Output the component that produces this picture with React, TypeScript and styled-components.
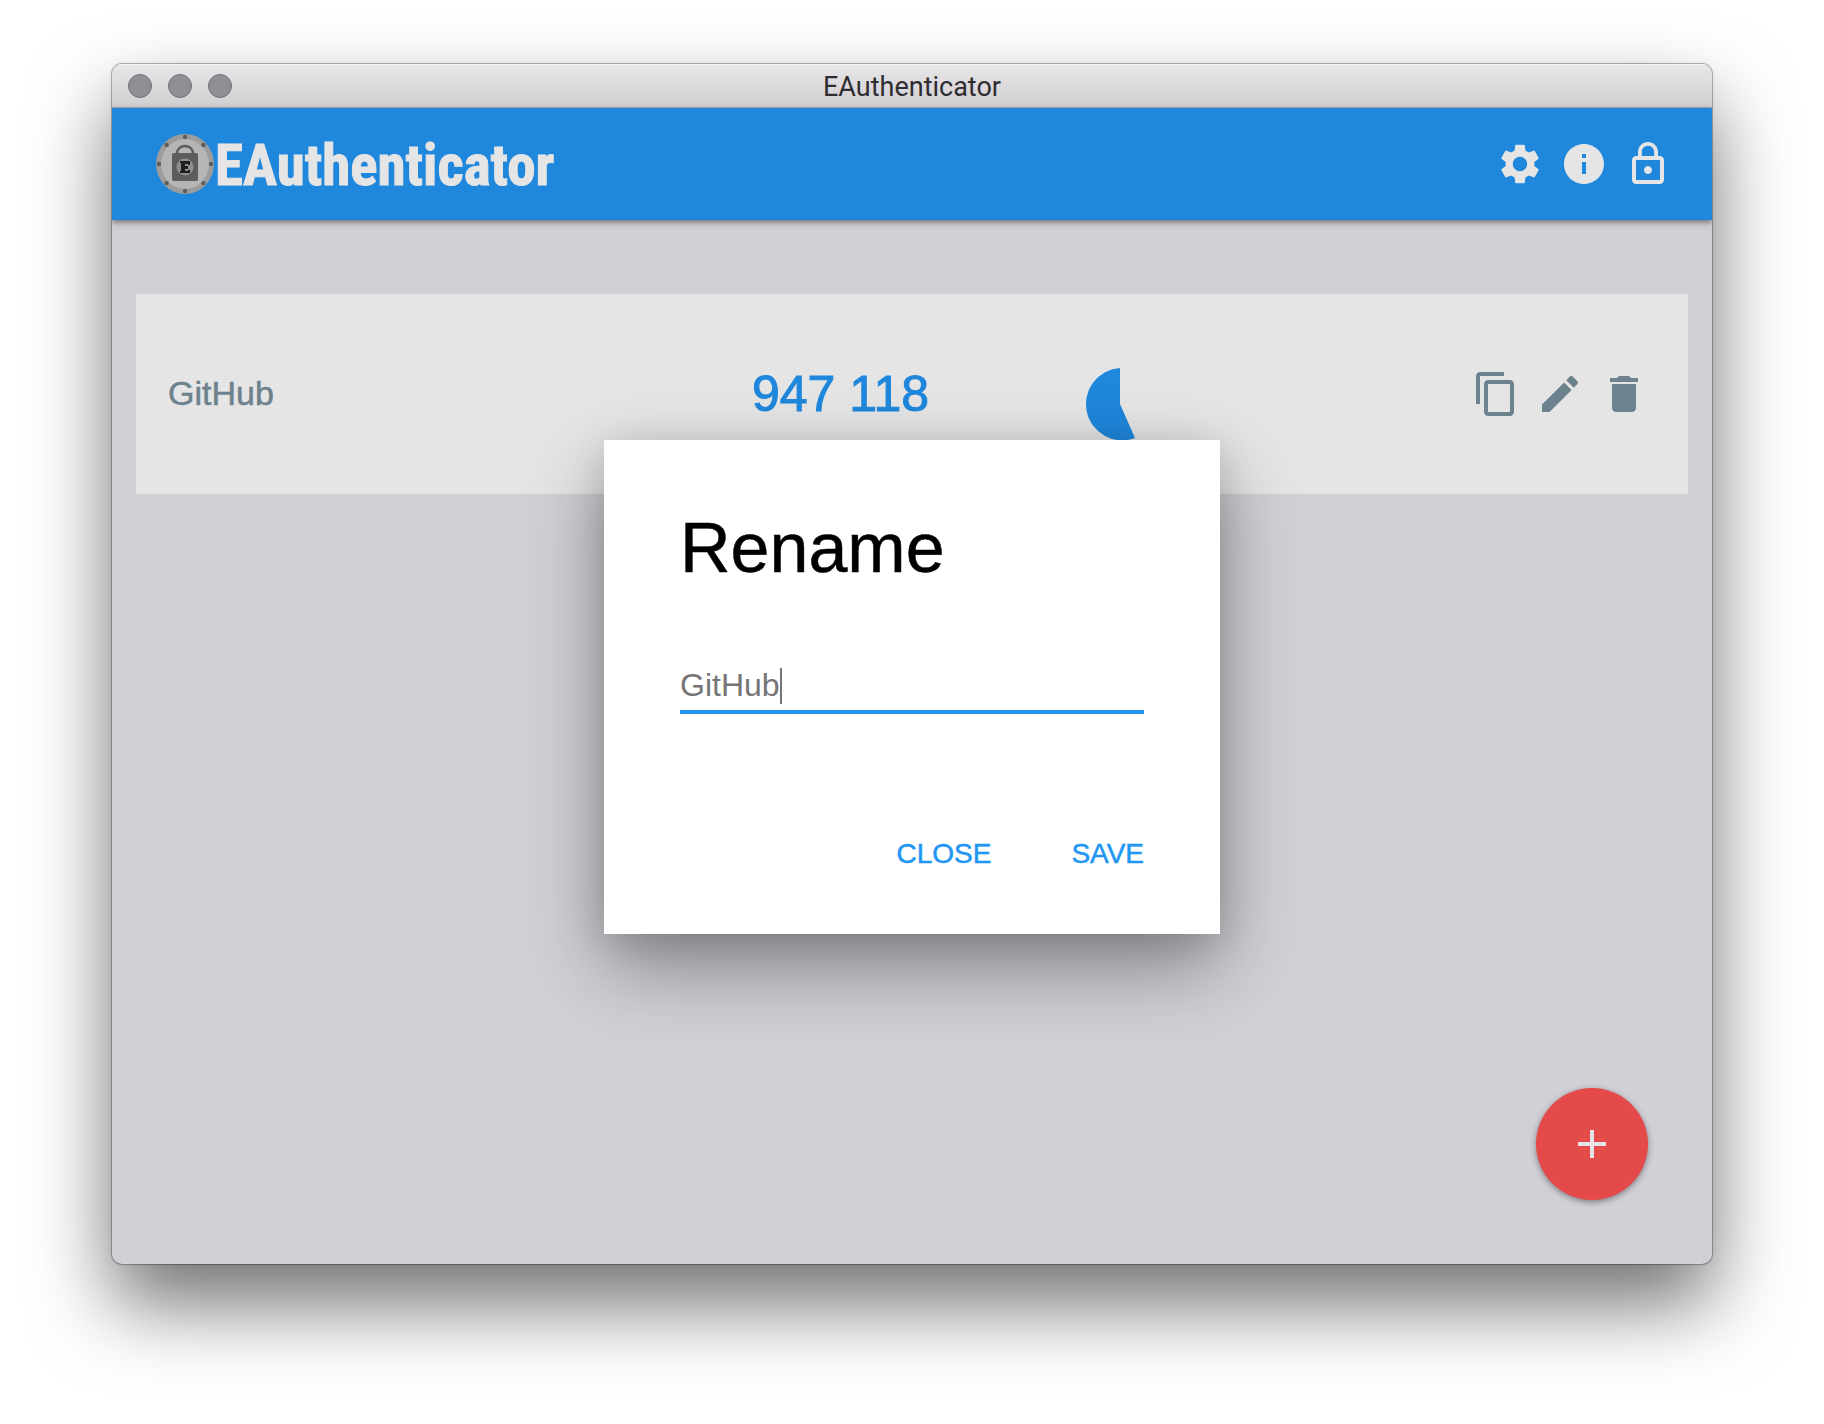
import React, { useState } from "react";
import styled, { createGlobalStyle } from "styled-components";
import {
  MdSettings,
  MdInfo,
  MdLockOutline,
  MdContentCopy,
  MdEdit,
  MdDelete,
  MdAdd,
} from "react-icons/md";

const GlobalStyle = createGlobalStyle`
  *, *::before, *::after { box-sizing: border-box; }
  body {
    margin: 0;
    background: #ffffff;
    font-family: "Liberation Sans", Arial, sans-serif;
  }
  button, input { font: inherit; }
`;

const Desktop = styled.div`
  display: flex;
  min-height: 100vh;
  padding: 64px 112px 160px;
`;

const AppWindow = styled.div`
  position: relative;
  flex: 1;
  display: flex;
  flex-direction: column;
  overflow: hidden;
  border-radius: 10px;
  background: #d1d0d6;
  box-shadow:
    0 0 0 1px rgba(0, 0, 0, 0.26),
    0 0 4px rgba(0, 0, 0, 0.1),
    0 40px 80px rgba(0, 0, 0, 0.56);
`;

const TitleBar = styled.div`
  display: grid;
  grid-template-columns: 1fr auto 1fr;
  align-items: center;
  height: 44px;
  padding: 0 16px;
  border-bottom: 1px solid #b1afb2;
  background: linear-gradient(#e8e6e9, #d1cfd2);
  box-shadow: inset 0 1px 0 #f5f4f5;
`;

const WindowTitle = styled.span`
  padding-top: 2px;
  color: #2e2d30;
  font: 27px/32px Roboto, sans-serif;
`;

const Lights = styled.div`
  display: flex;
  gap: 16px;
`;

const Light = styled.button`
  width: 24px;
  height: 24px;
  padding: 0;
  border: 1px solid #727176;
  border-radius: 50%;
  background: #8f8e94;
`;

const Header = styled.header`
  display: flex;
  align-items: center;
  justify-content: space-between;
  height: 112px;
  padding: 0 40px 0 44px;
  background: #1f87dc;
  color: #e5e5e5;
  box-shadow: 0 2px 6px rgba(0, 0, 0, 0.5);
`;

const Brand = styled.a`
  display: flex;
  align-items: center;
  gap: 1px;
  color: inherit;
  text-decoration: none;
`;

const BrandName = styled.span`
  padding-top: 4px;
  font: 700 57px/60px "Arial Narrow", "Roboto Condensed", Roboto, sans-serif;
  -webkit-text-stroke: 1px #e5e5e5;
`;

const IconRow = styled.div`
  display: flex;
  gap: 16px;
`;

const IconButton = styled.button`
  display: flex;
  padding: 0;
  border: 0;
  background: none;
  color: inherit;
  font-size: 48px;
  cursor: pointer;
`;

const Content = styled.main`
  flex: 1;
  padding: 74px 24px 0;
`;

const Account = styled.section`
  display: grid;
  grid-template-columns: 584px 334px 1fr auto;
  align-items: center;
  height: 200px;
  padding: 0 40px 0 32px;
  background: #e5e5e5;
  color: #6c828c;
`;

const AccountName = styled.span`
  padding-bottom: 2px;
  font-size: 34px;
  line-height: 40px;
  -webkit-text-stroke: 0.5px #6c828c;
`;

const Code = styled.output`
  color: #1f87dc;
  font-size: 50px;
  line-height: 56px;
  -webkit-text-stroke: 1px #1f87dc;
`;

const Timer = styled.svg`
  display: block;
  width: 72px;
  height: 72px;
  margin-top: 20px;
  fill: #1f87dc;
`;

const Fab = styled.button`
  position: absolute;
  right: 64px;
  bottom: 64px;
  display: flex;
  align-items: center;
  justify-content: center;
  width: 112px;
  height: 112px;
  padding: 0;
  border: 0;
  border-radius: 50%;
  background: #e54a4a;
  color: #e5e5e5;
  font-size: 48px;
  box-shadow: 0 2px 6px rgba(0, 0, 0, 0.4);
`;

const Backdrop = styled.div`
  position: absolute;
  inset: 44px 0 0;
  display: flex;
  align-items: center;
  justify-content: center;
  padding-top: 2px;
`;

const Dialog = styled.form`
  display: flex;
  flex-direction: column;
  width: 616px;
  padding: 68px 76px 60px;
  background: #ffffff;
  box-shadow:
    0 32px 72px rgba(0, 0, 0, 0.38),
    0 4px 32px rgba(0, 0, 0, 0.1);
`;

const DialogTitle = styled.h2`
  margin: 0;
  color: #000000;
  font-size: 70px;
  font-weight: 400;
  line-height: 80px;
  -webkit-text-stroke: 0.5px #000000;
`;

const Field = styled.div`
  position: relative;
  margin-top: 70px;
`;

const NameInput = styled.input`
  display: block;
  width: 100%;
  height: 56px;
  padding: 2px 0 0;
  border: 0;
  border-bottom: 4px solid #2196f3;
  outline: 0;
  background: none;
  color: #757575;
  caret-color: transparent;
  font-size: 32px;
`;

const Caret = styled.span`
  position: absolute;
  top: 10px;
  left: 100px;
  width: 2px;
  height: 36px;
  background: #757575;
`;

const Actions = styled.div`
  display: flex;
  justify-content: flex-end;
  gap: 80px;
  margin-top: 120px;
`;

const TextButton = styled.button`
  padding: 0;
  border: 0;
  background: none;
  color: #2196f3;
  font-size: 28px;
  line-height: 40px;
  text-transform: uppercase;
  -webkit-text-stroke: 0.5px #2196f3;
`;

const rivets = [0, 45, 90, 135, 180, 225, 270, 315];

function Logo() {
  return (
    <svg width="58" height="60" viewBox="0 0 58 60" aria-hidden="true">
      <ellipse cx="29" cy="30" rx="29" ry="30" fill="#9c9c9c" />
      <ellipse cx="29" cy="30" rx="24" ry="25" fill="#b5b5b5" />
      {rivets.map((angle) => (
        <circle
          key={angle}
          cx={29 + 26 * Math.cos((angle * Math.PI) / 180)}
          cy={30 + 27 * Math.sin((angle * Math.PI) / 180)}
          r="2.2"
          fill="#5c5c5c"
        />
      ))}
      <path d="M21 20v-1a8 7 0 0 1 16 0v1" fill="none" stroke="#5c5c5c" strokeWidth="2.4" />
      <rect x="16" y="19" width="26" height="28" rx="2" fill="#5c5c5c" />
      <circle cx="29" cy="33" r="8.5" fill="#8f8f8f" />
      <path d="M24 27h10v4h-2v-1h-3v2h3v3h-3v2h3v-1h2v3H24v-2h1v-8h-1z" fill="#1e1e1e" />
    </svg>
  );
}

export default function App() {
  const [name, setName] = useState("GitHub");
  return (
    <>
      <GlobalStyle />
      <Desktop>
        <AppWindow>
          <TitleBar>
            <Lights>
              <Light aria-label="Close window" />
              <Light aria-label="Minimize window" />
              <Light aria-label="Zoom window" />
            </Lights>
            <WindowTitle>EAuthenticator</WindowTitle>
          </TitleBar>
          <Header>
            <Brand href="#">
              <Logo />
              <BrandName>EAuthenticator</BrandName>
            </Brand>
            <IconRow>
              <IconButton aria-label="Settings"><MdSettings /></IconButton>
              <IconButton aria-label="About"><MdInfo /></IconButton>
              <IconButton aria-label="Lock"><MdLockOutline /></IconButton>
            </IconRow>
          </Header>
          <Content>
            <Account>
              <AccountName>GitHub</AccountName>
              <Code>947 118</Code>
              <Timer viewBox="0 0 72 72" aria-hidden="true">
                <path d="M34 36V0A36.2 36.2 0 1 0 49 70Z" />
              </Timer>
              <IconRow>
                <IconButton aria-label="Copy code"><MdContentCopy /></IconButton>
                <IconButton aria-label="Rename account"><MdEdit /></IconButton>
                <IconButton aria-label="Delete account"><MdDelete /></IconButton>
              </IconRow>
            </Account>
          </Content>
          <Fab aria-label="Add account"><MdAdd /></Fab>
          <Backdrop>
            <Dialog role="dialog" aria-labelledby="rename-title" onSubmit={(e) => e.preventDefault()}>
              <DialogTitle id="rename-title">Rename</DialogTitle>
              <Field>
                <NameInput
                  aria-labelledby="rename-title"
                  autoFocus
                  value={name}
                  onChange={(e) => setName(e.target.value)}
                />
                <Caret />
              </Field>
              <Actions>
                <TextButton type="button">Close</TextButton>
                <TextButton type="submit">Save</TextButton>
              </Actions>
            </Dialog>
          </Backdrop>
        </AppWindow>
      </Desktop>
    </>
  );
}
